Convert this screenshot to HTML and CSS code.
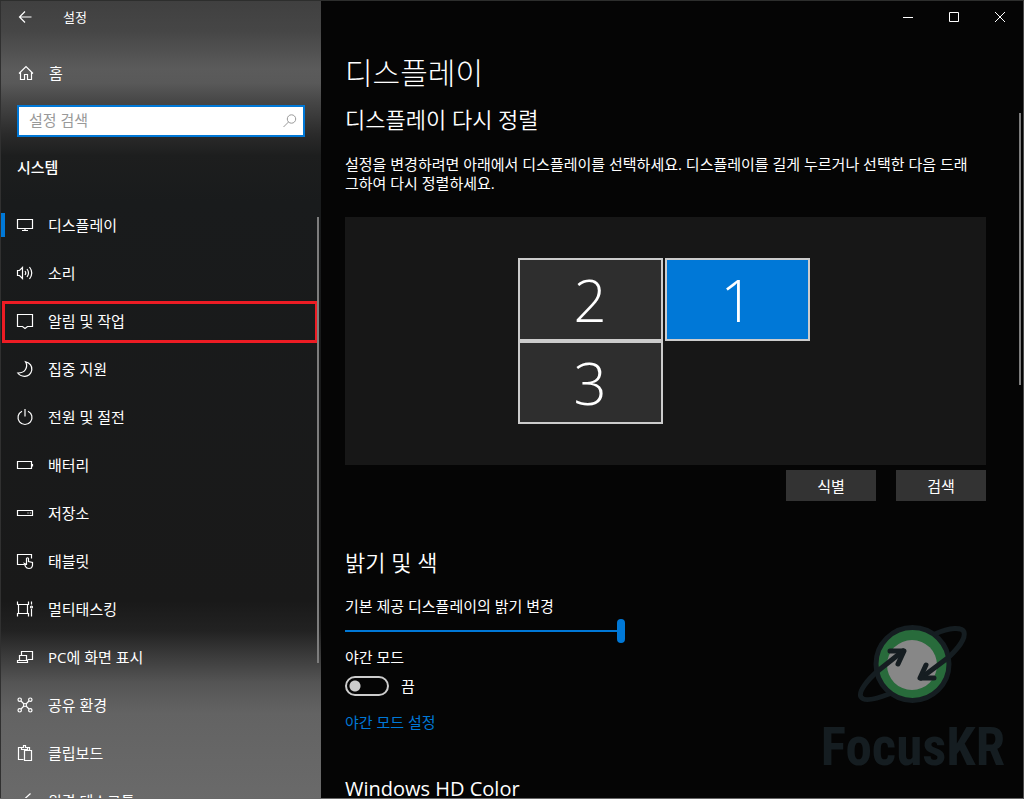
FILE: index.html
```html
<!DOCTYPE html>
<html lang="ko">
<head>
<meta charset="utf-8">
<meta name="viewport" content="width=device-width, initial-scale=1">
<title>설정</title>
<link rel="stylesheet" href="styles.css">
</head>
<body>
<div class="window">
  <aside class="sidebar">
    <header class="titlebar">
      <button class="back" type="button" aria-label="뒤로">
        <svg class="icon" viewBox="0 0 18 18"><path d="M15.500 9H3.500M9 3.500L3.500 9L9 14.500"/></svg>
      </button>
      <span class="app-name">설정</span>
    </header>
    <a class="home" href="#home">
      <svg class="icon" viewBox="0 0 18 18"><path d="M2 9.500L9 2.500L16 9.500M3.500 8.500V15.500H7.500V10.500H10.500V15.500H14.500V8.500"/></svg>
      <span>홈</span>
    </a>
    <form class="search" role="search">
      <input class="search-input" type="text" placeholder="설정 검색" aria-label="설정 검색">
      <svg class="search-icon" viewBox="0 0 16 16"><circle cx="9.500" cy="6" r="4.200"/><path d="M6.500 9L1.500 14"/></svg>
    </form>
    <h2 class="group">시스템</h2>
    <nav class="nav">
      <a class="nav-item current" href="#display" aria-current="page">
        <svg class="icon" viewBox="0 0 18 18"><path d="M1.500 3.500H16.500V12.500H1.500ZM9 12.500V14.500M6 14.500H12"/></svg>
        <span>디스플레이</span>
      </a>
      <a class="nav-item" href="#sound">
        <svg class="icon" viewBox="0 0 18 18"><path d="M1.500 6.500H3.500L6.500 3.500V14.500L3.500 11.500H1.500ZM9 7Q10.500 9 9 11M11 5Q14 9 11 13M13.500 3Q18 9 13.500 15"/></svg>
        <span>소리</span>
      </a>
      <a class="nav-item marked" href="#notifications">
        <svg class="icon" viewBox="0 0 18 18"><path d="M1.500 2.500H16.500V14.500H11.500L9 16.500L6.500 14.500H1.500Z"/></svg>
        <span>알림 및 작업</span>
      </a>
      <a class="nav-item" href="#focus">
        <svg class="icon" viewBox="0 0 18 18"><path d="M9.500 1.800C14 3 16.200 6 15.800 10C15.200 14 12 16.500 8.500 16.300C5.500 16.200 3.200 15 1.800 13C5 13 8 12 9.500 9.500C11 7 10.800 4 9.500 1.800Z"/></svg>
        <span>집중 지원</span>
      </a>
      <a class="nav-item" href="#power">
        <svg class="icon" viewBox="0 0 18 18"><path d="M6 3.200A7 7 0 1 0 12 3.200M9 1V8.500"/></svg>
        <span>전원 및 절전</span>
      </a>
      <a class="nav-item" href="#battery">
        <svg class="icon" viewBox="0 0 18 18"><path d="M1.500 5.500H15.500V12.500H1.500ZM16.500 8V10.500"/></svg>
        <span>배터리</span>
      </a>
      <a class="nav-item" href="#storage">
        <svg class="icon" viewBox="0 0 18 18"><path d="M1.500 6.500H16.500V11.500H1.500ZM11.500 9H12.500M13.800 9H14.800"/></svg>
        <span>저장소</span>
      </a>
      <a class="nav-item" href="#tablet">
        <svg class="icon" viewBox="0 0 18 18"><path d="M8 12.500H1.500V2.500H15.500V6.500M10.500 13V6.500Q11.500 5 12.500 6.500V9.500L16.500 10.500V13.500Q16 16.500 13 16.500Q10.500 16.500 9.500 14.500L8.300 11.500L10.500 12.500"/></svg>
        <span>태블릿</span>
      </a>
      <a class="nav-item" href="#multitasking">
        <svg class="icon" viewBox="0 0 18 18"><path d="M1.500 1.500V4.500H12.500V1.500M1.500 16.500V13.500H12.500V16.500M2.500 4.500V13.500M11.500 4.500V13.500M15.500 1.500V4.500M15.500 9V16.500"/><circle cx="15.500" cy="7" r="1"/></svg>
        <span>멀티태스킹</span>
      </a>
      <a class="nav-item" href="#projecting">
        <svg class="icon" viewBox="0 0 18 18"><path d="M5.500 7V3.500H16.500V11.500H11.500M3.500 12V7.500H10.500V12M1.500 12.500H11.500V14.500H1.500Z"/></svg>
        <span>PC에 화면 표시</span>
      </a>
      <a class="nav-item" href="#shared">
        <svg class="icon" viewBox="0 0 18 18"><circle cx="3.700" cy="3.700" r="1.700"/><circle cx="14.300" cy="3.700" r="1.700"/><circle cx="3.700" cy="14.300" r="1.700"/><circle cx="14.300" cy="14.300" r="1.700"/><circle cx="9" cy="9" r="1.500"/><path d="M5 5L8 8M13 5L10 8M5 13L8 10M13 13L10 10"/></svg>
        <span>공유 환경</span>
      </a>
      <a class="nav-item" href="#clipboard">
        <svg class="icon" viewBox="0 0 18 18"><path d="M7.500 15.500H2.500V3.500H5.500M11.500 3.500H13.500V6.500M5.500 5.500V3.500H7.500V1.500H9.500V3.500H11.500V5.500ZM8.500 6.500H15.500V16.500H8.500Z"/></svg>
        <span>클립보드</span>
      </a>
      <a class="nav-item" href="#remote">
        <svg class="icon" viewBox="0 0 18 18"><path d="M14.500 1.500L8 7.500L14.500 13.500M4 7L9 12L4 17"/></svg>
        <span>원격 데스크톱</span>
      </a>
    </nav>
    <span class="scrollbar sidebar-scroll"></span>
  </aside>

  <main class="content">
    <div class="controls">
      <button class="control" type="button" aria-label="최소화"><svg class="control-icon" viewBox="0 0 12 12"><path d="M1 6.500H11"/></svg></button>
      <button class="control" type="button" aria-label="최대화"><svg class="control-icon" viewBox="0 0 12 12"><path d="M1.500 1.500H10.500V10.500H1.500Z"/></svg></button>
      <button class="control" type="button" aria-label="닫기"><svg class="control-icon" viewBox="0 0 12 12"><path d="M1 1L11 11M11 1L1 11"/></svg></button>
    </div>
    <div class="page">
      <h1 class="title">디스플레이</h1>
      <h2 class="section-title">디스플레이 다시 정렬</h2>
      <p class="description">설정을 변경하려면 아래에서 디스플레이를 선택하세요. 디스플레이를 길게 누르거나 선택한 다음 드래<br>그하여 다시 정렬하세요.</p>
      <div class="arranger">
        <button class="monitor" type="button">2</button>
        <button class="monitor selected" type="button">1</button>
        <button class="monitor" type="button">3</button>
      </div>
      <div class="actions">
        <button class="action" type="button">식별</button>
        <button class="action" type="button">검색</button>
      </div>
      <h2 class="section-title brightness-title">밝기 및 색</h2>
      <label class="label" for="brightness">기본 제공 디스플레이의 밝기 변경</label>
      <input class="slider" id="brightness" type="range" min="0" max="100" value="100">
      <label class="label" for="night">야간 모드</label>
      <div class="toggle-row">
        <input class="toggle" id="night" type="checkbox" role="switch">
        <span>끔</span>
      </div>
      <a class="link" href="#night-settings">야간 모드 설정</a>
      <h2 class="section-title hd-title">Windows HD Color</h2>
    </div>
    <span class="scrollbar content-scroll"></span>
    <div class="watermark">
      <svg class="logo" viewBox="0 0 120 84">
        <g transform="translate(-45 -21)">
          <circle cx="104.500" cy="63" r="36.500" fill="#286b3b" stroke="#151d21" stroke-width="5"/>
          <circle cx="104" cy="64" r="25" fill="#878787"/>
          <g fill="none" stroke="#151d21" stroke-width="5" stroke-linecap="round" stroke-linejoin="round">
            <path d="M127 33C142 26 154 26 156 31C158 38 150 47 141 56L113 77"/>
            <path d="M95 50L71 69C59 79 50 91 53 96C56 101 68 98 81 93"/>
            <path d="M82 50H96L90 63M118 64L112 77H126"/>
          </g>
        </g>
      </svg>
      <span class="brand">FocusKR</span>
    </div>
  </main>
</div>
</body>
</html>
```
FILE: styles.css
```css
* {
  box-sizing: border-box;
}

body {
  margin: 0;
  background: #050505;
  color: #fff;
  font: 15px/20px "Open Sans", "Noto Sans CJK KR", sans-serif;
}

button,
input {
  font: inherit;
  color: inherit;
}

button {
  padding: 0;
  border: 0;
  background: none;
}

a {
  color: inherit;
  text-decoration: none;
}

h1,
h2,
p {
  margin: 0;
}

.window {
  display: grid;
  grid-template-columns: 321px 1fr;
  height: 100vh;
  overflow: hidden;
  border: 1px solid #2d2e2d;
  border-width: 1px 1px 1px 0;
  border-right-color: #4a4a4a;
  border-bottom-color: #686868;
}

.sidebar {
  position: relative;
  display: flex;
  flex-direction: column;
  min-height: 0;
  overflow: hidden;
  border-left: 1px solid #303030;
  background: linear-gradient(#404040 0, #464646 30px, #5b5b5b 68px, #595959 82px, #474747 100px, #2a2a2a 134px, #1d1e1e 155px, #191b1c 200px, #191919 600px, #222 630px, #3b3b3b 655px, #555 682px, #636363 712px, #6a6a6a 799px);
}

.icon {
  flex: none;
  width: 18px;
  height: 18px;
  fill: none;
  stroke: currentColor;
  stroke-width: 1.2;
}

.titlebar {
  display: flex;
  flex: none;
  align-items: center;
  height: 32px;
  padding-left: 15px;
  gap: 29px;
  font-size: 13px;
}

.back {
  display: flex;
}

.home {
  display: flex;
  flex: none;
  align-items: center;
  height: 48px;
  margin-top: 16px;
  padding-left: 16px;
  gap: 14px;
}

.search {
  position: relative;
  display: flex;
  flex: none;
  margin: 8px 16px 0;
}

.search-input {
  width: 100%;
  height: 32px;
  padding: 0 32px 2px 10px;
  border: 2px solid #0078d7;
  border-radius: 0;
  outline: 0;
  background: #fff;
  color: #222;
}

.search-input::placeholder {
  color: #999;
  opacity: 1;
}

.search-icon {
  position: absolute;
  top: 8px;
  right: 7px;
  width: 16px;
  height: 16px;
  fill: none;
  stroke: #999;
}

.group {
  flex: none;
  margin: 20px 16px 24px;
  font-size: 15px;
  line-height: 20px;
  font-weight: 500;
}

.nav {
  display: flex;
  flex: 1;
  flex-direction: column;
  min-height: 0;
  overflow: hidden;
}

.nav-item {
  position: relative;
  display: flex;
  flex: none;
  align-items: center;
  height: 48px;
  padding-left: 15px;
  gap: 14px;
}

.current::before {
  content: "";
  position: absolute;
  left: 0;
  width: 4px;
  height: 24px;
  background: #0078d7;
}

.marked::after {
  content: "";
  position: absolute;
  inset: 4px 3px 2px 1px;
  border: 3px solid #ed1c24;
}

.scrollbar {
  position: absolute;
  width: 2px;
  background: #7d7d7d;
}

.sidebar-scroll {
  top: 216px;
  right: 2px;
  height: 446px;
}

.content {
  position: relative;
  min-width: 0;
  min-height: 0;
  overflow: hidden;
}

.controls {
  display: flex;
  justify-content: flex-end;
}

.control {
  display: flex;
  align-items: center;
  justify-content: center;
  width: 46px;
  height: 32px;
}

.control-icon {
  width: 12px;
  height: 12px;
  fill: none;
  stroke: #fff;
}

.page {
  display: flex;
  flex-direction: column;
  padding: 20px 37px 0 24px;
}

.title {
  font-size: 30px;
  line-height: 40px;
  font-weight: 300;
}

.section-title {
  margin-top: 12px;
  font-size: 22px;
  line-height: 28px;
  font-weight: 350;
}

.description {
  margin-top: 22px;
  line-height: 19px;
}

.arranger {
  display: grid;
  grid-template-columns: 145px 145px;
  grid-auto-rows: 83px;
  place-content: center;
  column-gap: 2px;
  height: 248px;
  margin-top: 24px;
  padding-right: 4px;
  background: #171717;
}

.monitor {
  border: 2px solid #ccc;
  background: #2e2e2e;
  font-size: 58px;
  line-height: 76px;
  font-weight: 300;
}

.selected {
  background: #0078d7;
}

.actions {
  display: flex;
  justify-content: flex-end;
  margin-top: 5px;
  gap: 20px;
}

.action {
  width: 90px;
  height: 31px;
  background: #333;
}

.brightness-title {
  margin-top: 47px;
}

.label {
  margin-top: 20px;
}

.slider {
  appearance: none;
  width: 280px;
  height: 24px;
  margin: 3px 0 0;
  background: linear-gradient(#0078d7, #0078d7) center / 100% 2px no-repeat;
}

.slider::-webkit-slider-thumb {
  appearance: none;
  width: 8px;
  height: 24px;
  border-radius: 4px;
  background: #0078d7;
}

.slider + .label {
  margin-top: 4px;
}

.toggle-row {
  display: flex;
  align-items: center;
  margin-top: 9px;
  gap: 12px;
}

.toggle {
  appearance: none;
  width: 44px;
  height: 20px;
  margin: 0;
  border: 2px solid #ccc;
  border-radius: 10px;
  background: radial-gradient(circle at 8px 8px, #ccc 5px, transparent 6px);
}

.link {
  align-self: flex-start;
  margin-top: 16px;
  color: #0078d7;
}

.hd-title {
  margin-top: 47px;
  font-size: 20px;
  line-height: 20px;
  font-weight: 400;
}

.content-scroll {
  top: 112px;
  right: 2px;
  height: 272px;
}

.watermark {
  position: absolute;
  right: 18px;
  bottom: 10px;
  display: flex;
  flex-direction: column;
  align-items: center;
  color: #151d21;
  pointer-events: none;
}

.logo {
  width: 120px;
  height: 84px;
}

.brand {
  font: bold 53px/82px "Roboto Condensed", Roboto, sans-serif;
}
```
